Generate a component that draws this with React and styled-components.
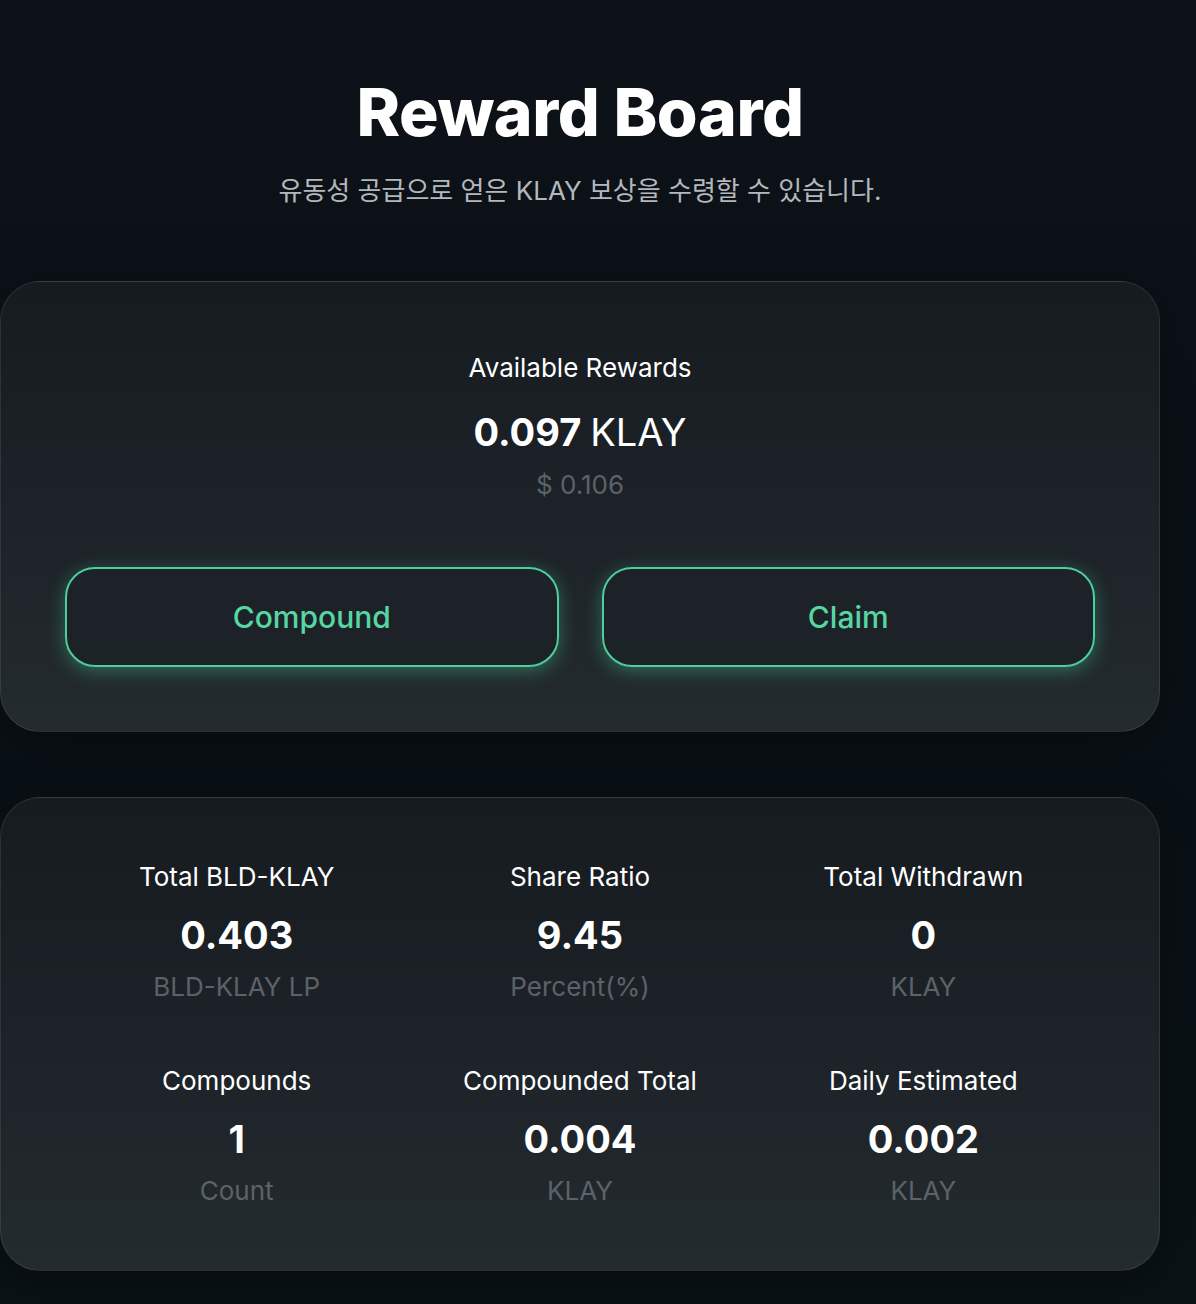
import React from 'react'
import styled, { createGlobalStyle } from 'styled-components'

const GlobalStyle = createGlobalStyle`
    html, body {
        margin: 0;
        padding: 0;
        background: #0a1015;
    }
    body {
        font-family: "Inter", "Noto Sans CJK KR", sans-serif;
        color: #ffffff;
        -webkit-font-smoothing: antialiased;
    }
`

const Page = styled.div`
    min-height: 1304px;
    background: linear-gradient(180deg, #0c1218 0%, #091015 60%, #0a1216 100%);
`

const Column = styled.main`
    width: 1160px;
    padding-top: 74px;
    display: flex;
    flex-direction: column;
    align-items: stretch;
`

const Header = styled.header`
    display: flex;
    flex-direction: column;
    align-items: center;
    gap: 25px;
    margin-bottom: 74px;
`

const Title = styled.h1`
    margin: 0;
    font-size: 66px;
    line-height: 76px;
    font-weight: 800;
    letter-spacing: -0.4px;
    color: #ffffff;
`

const Subtitle = styled.p`
    margin: 0;
    font-size: 26px;
    line-height: 32px;
    color: #b4b8bc;
    font-family: "Inter", "Noto Sans CJK KR", sans-serif;
`

const Card = styled.section`
    box-sizing: border-box;
    border-radius: 40px;
    border: 1px solid rgba(255, 255, 255, 0.09);
    background: linear-gradient(180deg, #161b20 0%, #1d2328 55%, #242b2f 100%);
    box-shadow: 0 10px 40px rgba(0, 0, 0, 0.35);
    padding: ${p => p.$pad};
    margin-bottom: 65px;
`

const RewardTop = styled.div`
    display: flex;
    flex-direction: column;
    align-items: center;
`

const Label = styled.div`
    font-size: 26px;
    line-height: 32px;
    font-weight: 400;
    color: #ffffff;
`

const Amount = styled.div`
    margin-top: ${p => p.$gap}px;
    font-size: 38px;
    line-height: 46px;
    font-weight: 700;
    color: #ffffff;

    span {
        font-weight: 400;
    }
`

const Muted = styled.div`
    margin-top: ${p => p.$gap}px;
    font-size: 26px;
    line-height: 32px;
    color: #5c6267;
`

const Actions = styled.div`
    display: grid;
    grid-template-columns: 1fr 1fr;
    gap: 43px;
    margin-top: 66px;
`

const GlowButton = styled.button`
    height: 100px;
    border-radius: 30px;
    border: 2px solid #4ccf9c;
    background: rgba(28, 34, 39, 0.9);
    color: #56d6a2;
    font-family: "Inter", sans-serif;
    font-size: 30px;
    font-weight: 500;
    box-shadow: 0 4px 18px rgba(70, 200, 150, 0.42);
    cursor: pointer;
`

const StatGrid = styled.div`
    display: grid;
    grid-template-columns: repeat(3, 1fr);
    row-gap: 62px;
`

const Stat = styled.div`
    display: flex;
    flex-direction: column;
    align-items: center;
`

const stats = [
    { label: 'Total BLD-KLAY', value: '0.403', unit: 'BLD-KLAY LP' },
    { label: 'Share Ratio', value: '9.45', unit: 'Percent(%)' },
    { label: 'Total Withdrawn', value: '0', unit: 'KLAY' },
    { label: 'Compounds', value: '1', unit: 'Count' },
    { label: 'Compounded Total', value: '0.004', unit: 'KLAY' },
    { label: 'Daily Estimated', value: '0.002', unit: 'KLAY' },
]

const App = () => {
    return (
        <Page>
            <GlobalStyle />
            <Column>
                <Header>
                    <Title>Reward Board</Title>
                    <Subtitle>유동성 공급으로 얻은 KLAY 보상을 수령할 수 있습니다.</Subtitle>
                </Header>

                <Card $pad="70px 64px 64px">
                    <RewardTop>
                        <Label>Available Rewards</Label>
                        <Amount $gap={25}>0.097 <span>KLAY</span></Amount>
                        <Muted $gap={14}>$ 0.106</Muted>
                    </RewardTop>
                    <Actions>
                        <GlowButton>Compound</GlowButton>
                        <GlowButton>Claim</GlowButton>
                    </Actions>
                </Card>

                <Card $pad="63px 64px 63px">
                    <StatGrid>
                        {stats.map(s => (
                            <Stat key={s.label}>
                                <Label>{s.label}</Label>
                                <Amount $gap={19}>{s.value}</Amount>
                                <Muted $gap={13}>{s.unit}</Muted>
                            </Stat>
                        ))}
                    </StatGrid>
                </Card>
            </Column>
        </Page>
    )
}

export default App
